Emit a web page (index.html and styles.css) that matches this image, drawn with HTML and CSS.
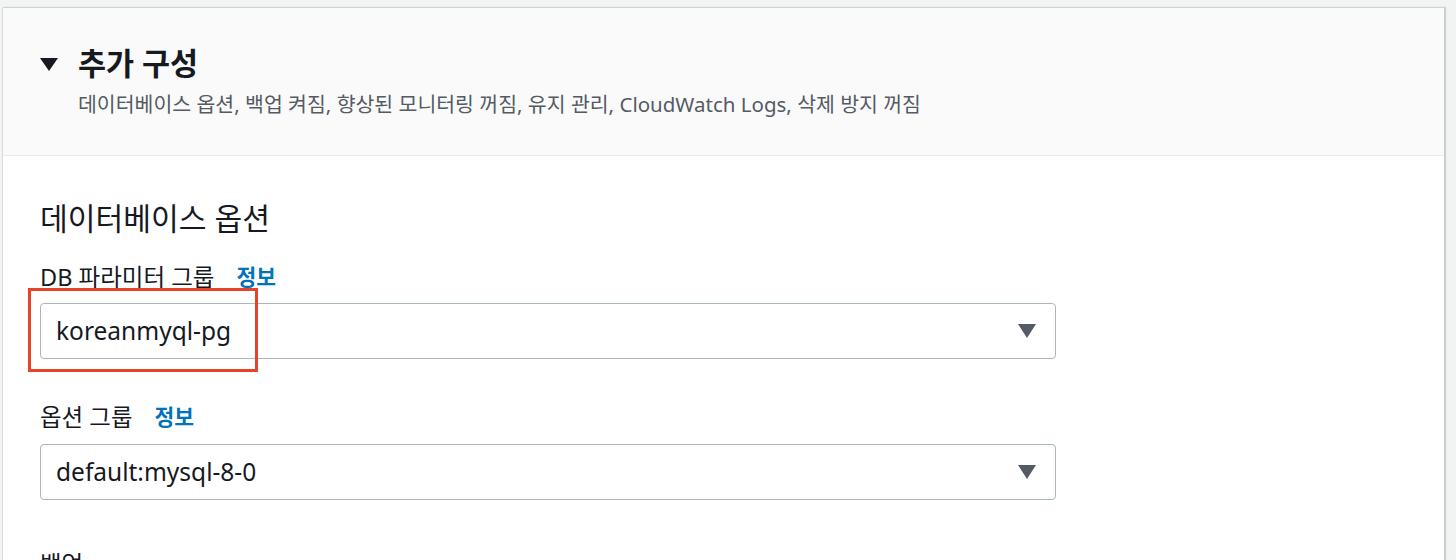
FILE: index.html
```html
<!DOCTYPE html>
<html lang="ko">
<head>
<meta charset="utf-8">
<title>추가 구성</title>
<link rel="stylesheet" href="styles.css">
</head>
<body>
<div class="page">
  <section class="card">
    <header class="card-header">
      <div class="title-row">
        <svg class="caret" width="18" height="13" viewBox="0 0 18 13"><path d="M0 0H18L9 13Z" fill="#16191f"/></svg>
        <h2 class="title">추가 구성</h2>
      </div>
      <p class="subtitle">데이터베이스 옵션, 백업 켜짐, 향상된 모니터링 꺼짐, 유지 관리, CloudWatch Logs, 삭제 방지 꺼짐</p>
    </header>
    <div class="card-body">
      <h3 class="section-title">데이터베이스 옵션</h3>

      <div class="field">
        <div class="label-row"><span class="label">DB 파라미터 그룹</span><a class="info">정보</a></div>
        <div class="select highlighted">
          <span class="value">koreanmyql-pg</span>
          <svg class="arrow" width="18" height="14" viewBox="0 0 18 14"><path d="M0 0H18L9 14Z" fill="#545b64"/></svg>
          <span class="mark"></span>
        </div>
      </div>

      <div class="field second">
        <div class="label-row"><span class="label">옵션 그룹</span><a class="info">정보</a></div>
        <div class="select">
          <span class="value">default:mysql-8-0</span>
          <svg class="arrow" width="18" height="14" viewBox="0 0 18 14"><path d="M0 0H18L9 14Z" fill="#545b64"/></svg>
        </div>
      </div>

      <div class="next-title">백업</div>
    </div>
  </section>
</div>
</body>
</html>
```

FILE: styles.css
```css
* { box-sizing: border-box; }
html, body {
  margin: 0;
  padding: 0;
  background: #f2f3f3;
  font-family: "Noto Sans", "Noto Sans CJK KR", sans-serif;
  color: #16191f;
}
.page {
  padding: 8px 0 0 3px;
  width: 1456px;
  height: 560px;
  overflow: hidden;
}
.card {
  width: 1441px;
  height: 600px;
  background: #ffffff;
  box-shadow: -1px 0 0 0 #d5dbdb, 1px 0 1px 1px rgba(0, 28, 36, 0.15), 0 1px 1px 0 rgba(0, 28, 36, 0.2);
}
.card-header {
  background: #fafafa;
  border-bottom: 1px solid #e9ebed;
  padding: 37px 37px 38px 37px;
}
.title-row {
  display: flex;
  align-items: center;
  height: 36px;
}
.caret {
  display: block;
  margin-right: 20px;
  margin-top: 2px;
}
.title {
  margin: 0;
  font-size: 30.5px;
  line-height: 36px;
  font-weight: 700;
  color: #16191f;
}
.subtitle {
  margin: 10px 0 0 38px;
  font-size: 20.5px;
  line-height: 26px;
  color: #545b64;
}
.card-body {
  padding: 45px 37px 0 37px;
}
.section-title {
  margin: 0;
  font-size: 30.2px;
  line-height: 36px;
  font-weight: 400;
  color: #16191f;
}
.field {
  margin-top: 26px;
  width: 1016px;
}
.field.second {
  margin-top: 44px;
}
.label-row {
  display: flex;
  align-items: center;
  height: 28px;
  gap: 22px;
}
.label {
  font-size: 23.5px;
  line-height: 28px;
  color: #16191f;
}
.info {
  font-size: 21.5px;
  line-height: 28px;
  font-weight: 700;
  color: #0073bb;
  cursor: pointer;
}
.select {
  position: relative;
  margin-top: 12px;
  height: 56px;
  border: 1px solid #aab7b8;
  border-radius: 4px;
  background: #ffffff;
  display: flex;
  align-items: center;
  justify-content: space-between;
  padding: 0 19px 0 15px;
}
.field.second .select {
  margin-top: 13px;
}
.value {
  font-size: 24.5px;
  line-height: 30px;
  color: #16191f;
}
.arrow {
  display: block;
}
.mark {
  position: absolute;
  left: -13px;
  top: -16px;
  width: 230px;
  height: 84px;
  border: 3px solid #e5432a;
  pointer-events: none;
}
.next-title {
  margin-top: 50px;
  font-size: 23.5px;
  line-height: 28px;
  color: #16191f;
}
```
